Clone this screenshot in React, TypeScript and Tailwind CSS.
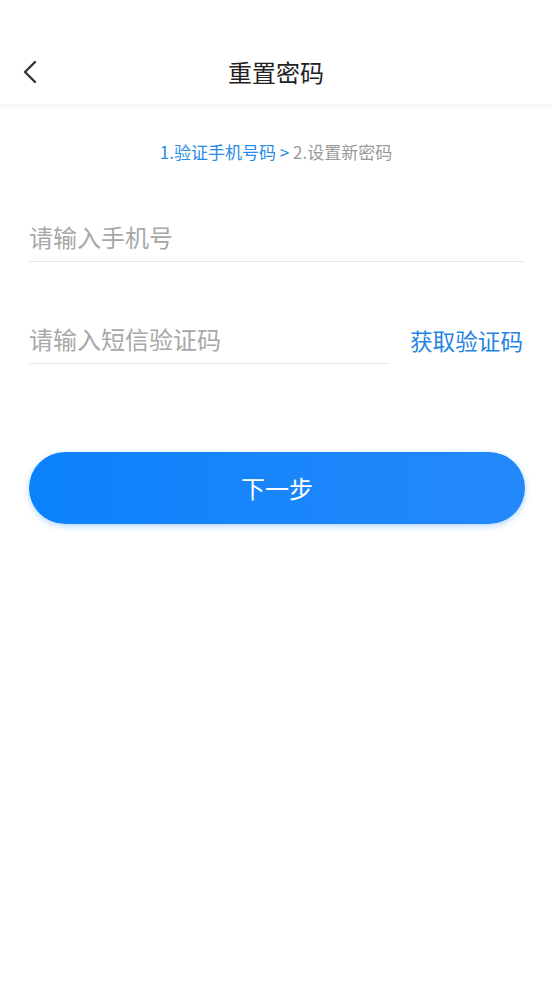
import React from "react";

export default function App() {
  const font = { fontFamily: '"Noto Sans CJK SC", "Noto Sans", sans-serif' };
  return (
    <div className="w-[552px] h-[983px] bg-white relative" style={font}>
      <div className="h-[104px] pt-[40px] bg-white">
        <div className="h-[64px] flex items-center relative">
          <div className="absolute left-[22px] top-[20px]">
            <svg width="16" height="24" viewBox="0 0 16 24" fill="none">
              <path d="M13 2 L3 12 L13 22" stroke="#333" strokeWidth="2.4" strokeLinecap="round" strokeLinejoin="round" />
            </svg>
          </div>
          <div className="flex-1 text-center text-[24px] leading-[32px] text-[#222]">重置密码</div>
        </div>
      </div>
      <div className="h-[6px] bg-gradient-to-b from-[#f2f2f2] to-white" />
      <div className="mt-[31px] text-center text-[17px] leading-[22px]">
        <span className="text-[#2a8be6]">1.验证手机号码 &gt; </span>
        <span className="text-[#999999]">2.设置新密码</span>
      </div>
      <div className="px-[29px]">
        <div className="mt-[51px] pt-[8px] pb-[9px] border-b border-[#e6e6e6] mr-[-1px]">
          <div className="text-[24px] leading-[30px] text-[#a8a8a8]">请输入手机号</div>
        </div>
        <div className="mt-[54px] flex">
          <div className="w-[359px] pt-[8px] pb-[9px] border-b border-[#e6e6e6]">
            <div className="text-[24px] leading-[30px] text-[#a8a8a8]">请输入短信验证码</div>
          </div>
          <div className="flex-1 pt-[10px] flex justify-end">
            <span className="text-[22.6px] leading-[30px] text-[#1f84e4]">获取验证码</span>
          </div>
        </div>
        <button className="mt-[88px] w-[496px] h-[72px] rounded-full bg-gradient-to-r from-[#0a82fb] to-[#2389fb] text-white text-[24px] flex items-center justify-center shadow-[0_2px_6px_rgba(30,136,251,0.35)]">
          下一步
        </button>
      </div>
    </div>
  );
}
